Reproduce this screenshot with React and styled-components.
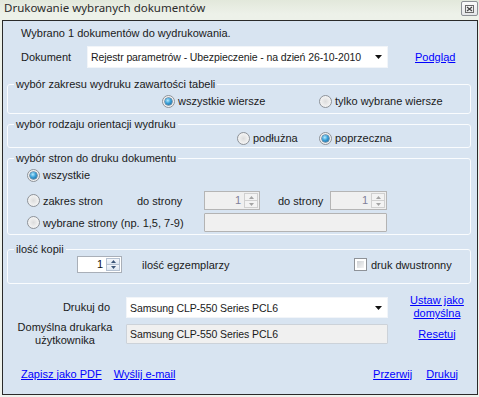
import React from "react";
import styled, { createGlobalStyle } from "styled-components";

const GlobalStyle = createGlobalStyle`
  html, body { margin: 0; padding: 0; }
  body {
    width: 479px; height: 397px; overflow: hidden;
    font-family: "Liberation Sans", Arial, sans-serif;
    font-size: 11px; color: #1a1a1a;
    background: #eef2ea;
  }
  * { box-sizing: border-box; }
`;

const Window = styled.div`
  width: 479px; height: 397px;
  display: flex; flex-direction: column;
  background: linear-gradient(180deg, #e2e8db 0%, #edf1e9 14px, #f0f3ed 100%);
`;

const TitleBar = styled.div`
  height: 20px; flex: none;
  display: flex; align-items: flex-start; justify-content: space-between;
  padding: 0 1px 0 4px;
`;

const Title = styled.div`
  font-family: "Noto Sans", "Open Sans", sans-serif;
  font-size: 11.5px; line-height: 16px; color: #2b2b2b;
`;

const CloseButton = styled.div`
  margin-top: 1px; width: 17px; height: 15px;
  border: 1px solid #8c9096; border-radius: 2px;
  background: linear-gradient(180deg, #fbfbfb, #e4e6e8);
  display: flex; align-items: center; justify-content: center;
`;

const Panel = styled.div`
  flex: 1; margin: 0 1px 2px 2px;
  border: 1px solid #2a2a2a;
  background: #d8e4f1;
  padding: 5px 6px 0 4px;
  display: flex; flex-direction: column;
`;

const Info = styled.div`
  line-height: 14px; margin-left: 14px;
`;

const Row = styled.div`
  display: flex; align-items: center;
  height: ${(p) => p.$h || 14}px;
  margin-top: ${(p) => p.$mt || 0}px;
  padding-left: ${(p) => p.$pl || 0}px;
`;

const Cell = styled.div`
  flex: none; width: ${(p) => p.$w}px;
  display: flex; align-items: center;
  white-space: nowrap;
`;

const Combo = styled.div`
  flex: none; position: relative;
  width: ${(p) => p.$w}px; height: ${(p) => p.$h}px;
  background: #fff; border: 1px solid #f2f5f9;
  display: flex; align-items: center; padding-left: 3px;
  white-space: nowrap;
  font-size: 10.5px; letter-spacing: -0.1px;
`;

const ComboArrow = styled.svg`
  position: absolute; right: 5px; top: 50%; margin-top: -2px;
`;

const Link = styled.a`
  color: #0000ff; text-decoration: underline; cursor: pointer;
  line-height: 13px; white-space: nowrap;
  margin-left: ${(p) => p.$ml || 0}px;
`;

const Group = styled.fieldset`
  margin: ${(p) => p.$mt}px 0 0 0;
  padding: ${(p) => p.$pt || 0}px 0 0 0;
  height: ${(p) => p.$h}px;
  min-width: 0;
  border: 1px solid #fafcfe;
  border-radius: 3px;
`;

const Legend = styled.legend`
  margin-left: 6px; padding: 0 2px;
  font-size: 11px; line-height: 14px; color: #1a1a1a;
`;

const OptionLabel = styled.label`
  display: inline-flex; align-items: center; gap: 3px;
  white-space: nowrap; line-height: 14px;
`;

const RadioDot = styled.span`
  flex: none; width: 13px; height: 13px; border-radius: 50%;
  border: 1px solid #8e9298;
  background: radial-gradient(circle at 50% 50%, #dcdcdc 0, #ececec 45%, #fbfbfb 100%);
  display: inline-flex; align-items: center; justify-content: center;
  &::after {
    content: ""; display: ${(p) => (p.$on ? "block" : "none")};
    width: 7px; height: 7px; border-radius: 50%;
    background: radial-gradient(circle at 40% 35%, #b8ecff 0, #3aa0d8 45%, #145a8c 100%);
    box-shadow: 0 0 0 0.5px #1f4e78;
  }
`;

const CheckBox = styled.span`
  flex: none; width: 13px; height: 13px;
  border: 1px solid #8e9298; background: #fff; padding: 2px;
  &::after {
    content: ""; display: block; width: 100%; height: 100%;
    background: linear-gradient(135deg, #cfd2d6, #f4f4f4);
  }
`;

const SpinBox = styled.div`
  flex: none; display: flex;
  width: ${(p) => p.$w}px; height: ${(p) => p.$h}px;
  border: 1px solid ${(p) => (p.$disabled ? "#b5b5b5" : "#a9afb8")};
  background: ${(p) => (p.$disabled ? "#f0f0f0" : "#fff")};
  padding: 1px;
`;

const SpinValue = styled.span`
  flex: 1; text-align: right; padding-right: 3px;
  line-height: ${(p) => p.$lh}px;
  color: ${(p) => (p.$disabled ? "#7f7f99" : "#111")};
`;

const SpinButtons = styled.div`
  flex: none; width: 14px; display: flex; flex-direction: column;
`;

const SpinButton = styled.div`
  flex: 1; display: flex; align-items: center; justify-content: center;
  border: 1px solid ${(p) => (p.$disabled ? "#d0d0d0" : "#b5c1d1")};
  background: ${(p) =>
    p.$disabled ? "#f3f3f3" : "linear-gradient(180deg, #f4f7fb, #dde6f1)"};
  & + & { border-top: none; }
`;

const TextBox = styled.div`
  flex: none; width: ${(p) => p.$w}px; height: ${(p) => p.$h}px;
  background: #f0f0f0;
  border: 1px solid ${(p) => p.$border || "#b3b3b3"};
  border-radius: 1px;
  display: flex; align-items: center; padding-left: 3px;
  white-space: nowrap;
  font-size: 10.5px; letter-spacing: -0.1px;
`;

const PrinterGrid = styled.div`
  margin: 13px 0 0 7px;
  display: grid;
  grid-template-columns: 102px 262px 78px;
  column-gap: 10px;
  grid-template-rows: 21px 20px;
  row-gap: 6px;
  align-items: center;
`;

const FieldLabel = styled.div`
  text-align: ${(p) => p.$align || "right"};
  padding-right: ${(p) => (p.$align === "center" ? 0 : 6)}px;
  line-height: 13px;
`;

const LinkCell = styled.div`
  display: flex; flex-direction: column; align-items: center;
  margin-top: ${(p) => p.$mt || 0}px;
`;

const Footer = styled.div`
  margin-top: 23px; height: 14px;
  display: flex; align-items: center; justify-content: space-between;
  padding: 0 13px 0 14px;
`;

const LinkGroup = styled.div`
  display: flex; gap: ${(p) => p.$gap}px;
`;

const Arrow = ({ up, color }) => (
  <svg width="5" height="3" viewBox="0 0 5 3">
    <polygon points={up ? "0,3 2.5,0 5,3" : "0,0 5,0 2.5,3"} fill={color} />
  </svg>
);

const Radio = ({ on, children }) => (
  <OptionLabel>
    <RadioDot $on={on} />
    {children}
  </OptionLabel>
);

const Spin = ({ w, h, disabled }) => {
  const c = disabled ? "#a4a4a4" : "#3d5678";
  return (
    <SpinBox $w={w} $h={h} $disabled={disabled}>
      <SpinValue $lh={h - 4} $disabled={disabled}>1</SpinValue>
      <SpinButtons>
        <SpinButton $disabled={disabled}><Arrow up color={c} /></SpinButton>
        <SpinButton $disabled={disabled}><Arrow color={c} /></SpinButton>
      </SpinButtons>
    </SpinBox>
  );
};

const DropArrow = () => (
  <ComboArrow width="7" height="4" viewBox="0 0 7 4">
    <polygon points="0,0 7,0 3.5,4" fill="#111" />
  </ComboArrow>
);

export default function App() {
  return (
    <>
      <GlobalStyle />
      <Window>
        <TitleBar>
          <Title>Drukowanie wybranych dokumentów</Title>
          <CloseButton>
            <svg width="9" height="8" viewBox="0 0 9 8">
              <rect x="0.5" y="0.5" width="8" height="7" fill="none" stroke="#6a6a6a" />
              <path d="M2 2 L7 6 M7 2 L2 6" stroke="#444" strokeWidth="1.2" />
            </svg>
          </CloseButton>
        </TitleBar>
        <Panel>
          <Info>Wybrano 1 dokumentów do wydrukowania.</Info>
          <Row $h={22} $mt={6} $pl={14}>
            <Cell $w={66}>Dokument</Cell>
            <Combo $w={301} $h={22}>
              Rejestr parametrów - Ubezpieczenie - na dzień 26-10-2010
              <DropArrow />
            </Combo>
            <Link $ml={27}>Podgląd</Link>
          </Row>

          <Group $mt={9} $h={37} $pt={3}>
            <Legend>wybór zakresu wydruku zawartości tabeli</Legend>
            <Row $pl={154}>
              <Cell $w={157}><Radio on>wszystkie wiersze</Radio></Cell>
              <Radio>tylko wybrane wiersze</Radio>
            </Row>
          </Group>

          <Group $mt={3} $h={31} $pt={0}>
            <Legend>wybór rodzaju orientacji wydruku</Legend>
            <Row $pl={229}>
              <Cell $w={82}><Radio>podłużna</Radio></Cell>
              <Radio on>poprzeczna</Radio>
            </Row>
          </Group>

          <Group $mt={3} $h={84} $pt={3}>
            <Legend>wybór stron do druku dokumentu</Legend>
            <Row $pl={19}>
              <Radio on>wszystkie</Radio>
            </Row>
            <Row $h={19} $mt={9} $pl={19}>
              <Cell $w={110}><Radio>zakres stron</Radio></Cell>
              <Cell $w={67}>do strony</Cell>
              <Spin w={56} h={19} disabled />
              <Cell $w={18} />
              <Cell $w={52}>do strony</Cell>
              <Spin w={57} h={19} disabled />
            </Row>
            <Row $h={19} $mt={3} $pl={19}>
              <Cell $w={177}><Radio>wybrane strony (np. 1,5, 7-9)</Radio></Cell>
              <TextBox $w={183} $h={19} />
            </Row>
          </Group>

          <Group $mt={7} $h={42} $pt={0}>
            <Legend>ilość kopii</Legend>
            <Row $h={17} $pl={69}>
              <Spin w={45} h={17} />
              <Cell $w={20} />
              <Cell $w={212}>ilość egzemplarzy</Cell>
              <OptionLabel>
                <CheckBox />
                <span style={{ marginLeft: 1 }}>druk dwustronny</span>
              </OptionLabel>
            </Row>
          </Group>

          <PrinterGrid>
            <FieldLabel>Drukuj do</FieldLabel>
            <Combo $w={262} $h={21}>
              Samsung CLP-550 Series PCL6
              <DropArrow />
            </Combo>
            <LinkCell $mt={-1}>
              <Link>Ustaw jako</Link>
              <Link>domyślna</Link>
            </LinkCell>

            <FieldLabel $align="center">
              Domyślna drukarka
              <br />
              użytkownika
            </FieldLabel>
            <TextBox $w={262} $h={20} $border="#ccd2d9">
              Samsung CLP-550 Series PCL6
            </TextBox>
            <LinkCell>
              <Link>Resetuj</Link>
            </LinkCell>
          </PrinterGrid>

          <Footer>
            <LinkGroup $gap={12}>
              <Link>Zapisz jako PDF</Link>
              <Link>Wyślij e-mail</Link>
            </LinkGroup>
            <LinkGroup $gap={14}>
              <Link>Przerwij</Link>
              <Link>Drukuj</Link>
            </LinkGroup>
          </Footer>
        </Panel>
      </Window>
    </>
  );
}
